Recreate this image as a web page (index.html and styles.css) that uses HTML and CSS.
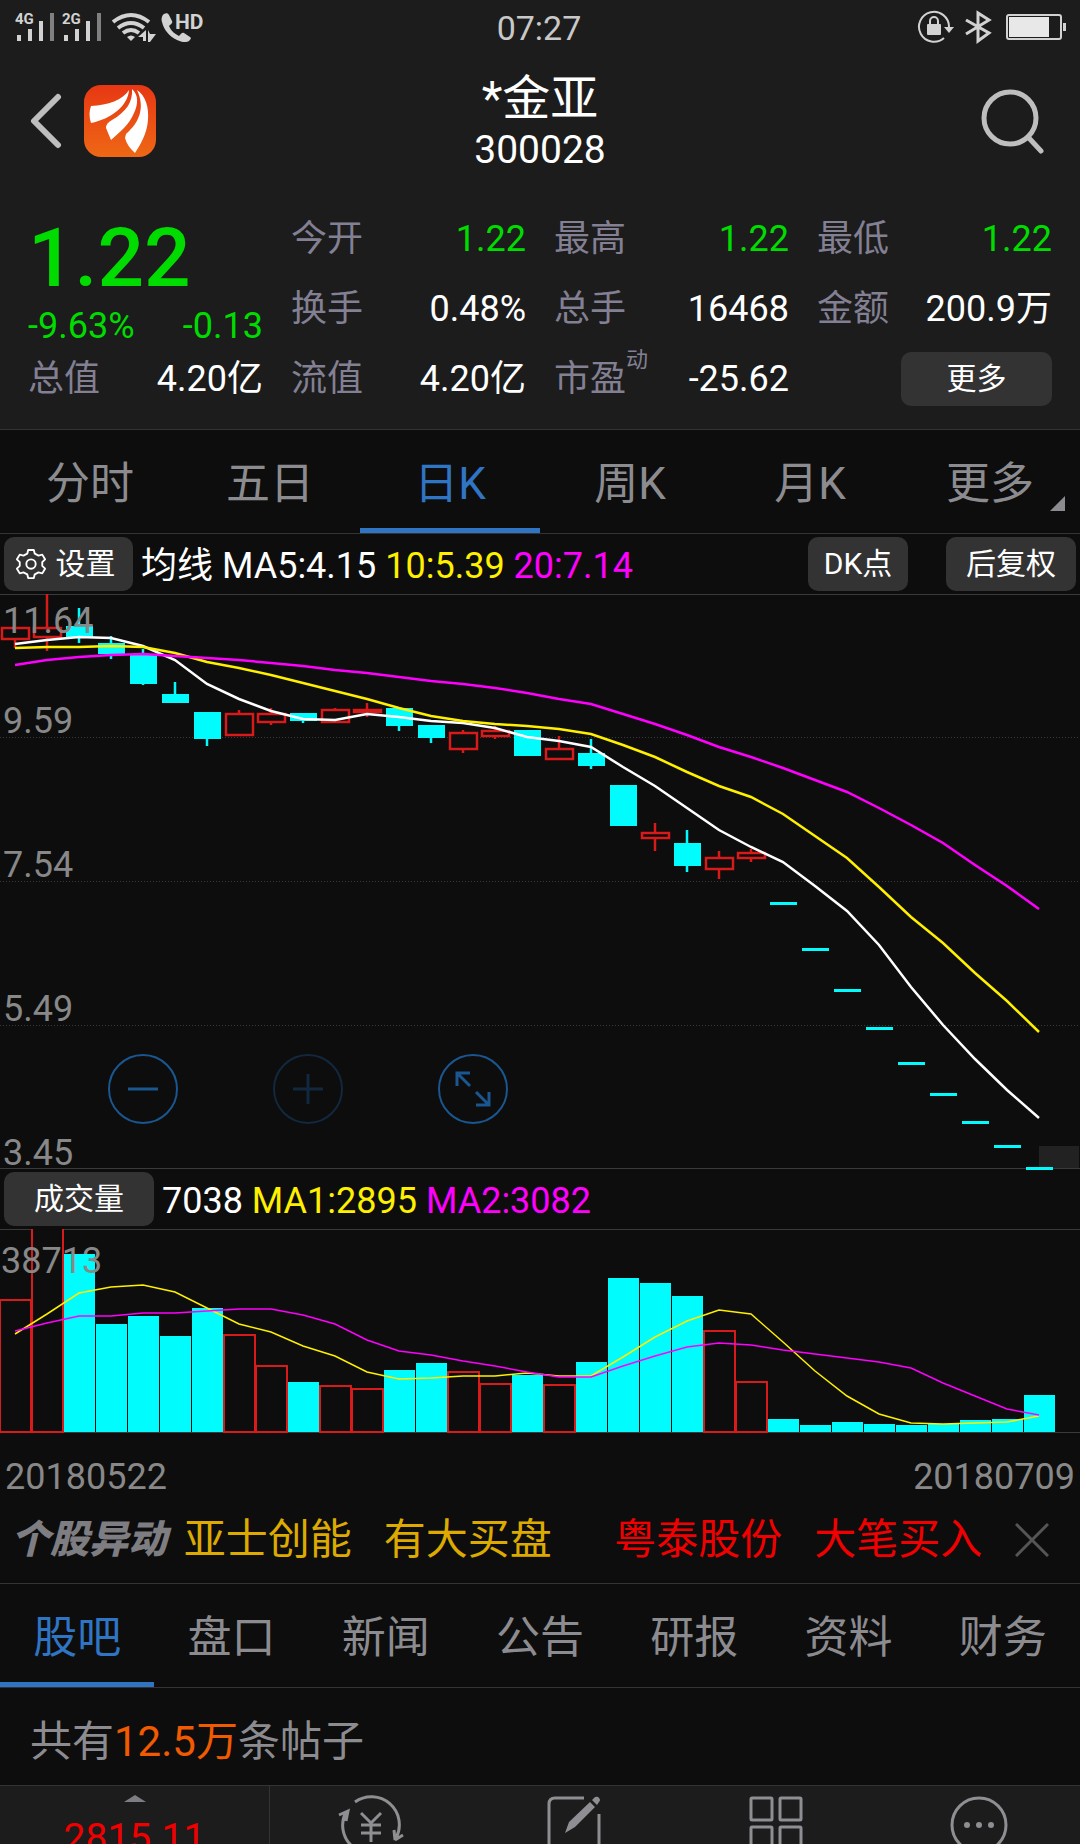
FILE: index.html
```html
<!DOCTYPE html>
<html lang="zh-CN">
<head>
  <meta charset="UTF-8">
  <meta name="viewport" content="width=device-width, initial-scale=1.0">
  <title>*金亚 300028</title>
  <link rel="stylesheet" href="styles.css">
</head>
<body>
<div class="app">

  <!-- 状态栏 -->
  <div class="status-bar">
    <svg class="status-left" width="200" height="36" viewBox="10 10 200 36" fill="#d2d2d2">
      <text x="15" y="24" class="status-net">4G</text>
      <path d="M17 35h4v6h-4zM28 29h4v12h-4zM39 21h4v20h-4z"/>
      <path d="M50 13h4v28h-4z" fill="#808080"/>
      <text x="62" y="24" class="status-net">2G</text>
      <path d="M64 35h4v6h-4zM75 29h4v12h-4zM86 21h4v20h-4z"/>
      <path d="M97 13h4v28h-4z" fill="#808080"/>
      <g fill="none" stroke="#d2d2d2" stroke-width="4">
        <path d="M113 22q18-14 36 0"/>
        <path d="M118 28q13-10 26 0"/>
        <path d="M123 33q8-6 16 0"/>
      </g>
      <path d="M127 37q4-3 8 0l-4 4zM146 30v11h-3v-4h-5zM148 30l2 4h6l-6 8h-2z"/>
      <path d="M164 14c2-1 4-1 5 1l3 6c1 2-1 3-3 5 2 5 6 8 10 10 2-2 3-4 5-3l6 4c2 1 0 3-1 4-3 2-8 1-12-1-8-4-13-10-15-18-1-3 0-7 2-8z"/>
      <text x="175" y="29" class="status-hd">HD</text>
    </svg>
    <span class="status-time">07:27</span>
    <svg class="status-right" width="154" height="36" viewBox="912 10 154 36" fill="#d2d2d2">
      <path d="M942 38a15 15 0 1 1 5-11" fill="none" stroke="#d2d2d2" stroke-width="2"/>
      <path d="M942 27h10l-5 6z"/>
      <rect x="925" y="24" width="14" height="11" rx="1"/>
      <path d="M928 25v-4a4 4 0 0 1 8 0v4" fill="none" stroke="#d2d2d2" stroke-width="2"/>
      <path d="M964 20l23 13-11 8V13l11 7-23 14" fill="none" stroke="#d2d2d2" stroke-width="3"/>
      <rect x="1005" y="15" width="54" height="24" rx="2" fill="none" stroke="#d2d2d2" stroke-width="2"/>
      <rect x="1007" y="17" width="40" height="20" fill="#e8e8e8"/>
      <rect x="1061" y="23" width="3" height="8"/>
    </svg>
  </div>

  <!-- 标题 -->
  <header class="header">
    <div class="header-left">
      <a href="#" class="back" aria-label="返回">
        <svg width="32" height="56" viewBox="0 0 32 56"><path d="M28 4L4 28l24 24" fill="none" stroke="#bebebe" stroke-width="6" stroke-linecap="round" stroke-linejoin="round"/></svg>
      </a>
      <svg class="logo" width="72" height="72" viewBox="0 0 72 72">
        <defs>
          <linearGradient id="logo-bg" x1="0" y1="0" x2="0" y2="1">
            <stop offset="0" stop-color="#e73713"/>
            <stop offset="1" stop-color="#ee6815"/>
          </linearGradient>
        </defs>
        <rect width="72" height="72" rx="17" fill="url(#logo-bg)"/>
        <g fill="#fff">
          <path d="M45 5C44 21 27 34 7 38Q4 29 7 21C24 20 39 15 45 5z"/>
          <path d="M48 4C55 10 54 20 50 28C45 40 36 47 27 55L22 43Q22 38 28 35C42 27 49 17 48 4z"/>
          <path d="M53 5C62 11 65 23 64 35C63 49 56 60 51 68Q43 61 41 53L42 49C56 37 61 22 53 5z"/>
        </g>
      </svg>
    </div>
    <h1 class="title">*金亚<span class="code">300028</span></h1>
    <button class="search" aria-label="搜索">
      <svg width="64" height="68" viewBox="0 0 64 68" fill="none" stroke="#bebebe" stroke-width="5" stroke-linecap="round"><circle cx="30" cy="31" r="26"/><path d="M48 50l13 14"/></svg>
    </button>
  </header>

  <!-- 行情 -->
  <section class="quote">
    <div class="price">
      <strong class="price-now">1.22</strong>
      <div class="price-change"><span>-9.63%</span><span>-0.13</span></div>
    </div>
    <div class="item"><span class="label">今开</span><span class="down">1.22</span></div>
    <div class="item"><span class="label">最高</span><span class="down">1.22</span></div>
    <div class="item"><span class="label">最低</span><span class="down">1.22</span></div>
    <div class="item"><span class="label">换手</span><span>0.48%</span></div>
    <div class="item"><span class="label">总手</span><span>16468</span></div>
    <div class="item"><span class="label">金额</span><span>200.9万</span></div>
    <div class="item"><span class="label">总值</span><span>4.20亿</span></div>
    <div class="item"><span class="label">流值</span><span>4.20亿</span></div>
    <div class="item"><span class="label">市盈<sup>动</sup></span><span>-25.62</span></div>
    <div class="item item-more"><button class="btn btn-more">更多</button></div>
  </section>

  <!-- K线周期 -->
  <nav class="tabs">
    <a href="#">分时</a>
    <a href="#">五日</a>
    <a href="#" class="active">日K</a>
    <a href="#">周K</a>
    <a href="#">月K</a>
    <a href="#" class="has-menu">更多</a>
  </nav>

  <div class="toolbar">
    <button class="btn btn-set">
      <svg width="30" height="32" viewBox="-16 -17 32 34" fill="none" stroke="#fff" stroke-width="2" stroke-linejoin="round">
        <path d="M-3-15H3L4-11L8-9L12-10L15-5L12-2V2L15 5L12 10L8 9L4 11L3 15H-3L-4 11L-8 9L-12 10L-15 5L-12 2V-2L-15-5L-12-10L-8-9L-4-11z"/>
        <circle r="5"/>
      </svg>
      设置
    </button>
    <p class="legend">均线 MA5:4.15 <span class="ma-yellow">10:5.39</span> <span class="ma-pink">20:7.14</span></p>
    <button class="btn btn-dk">DK点</button>
    <button class="btn btn-fq">后复权</button>
  </div>

  <!-- K线图 -->
  <div class="chart">
    <svg id="kline" viewBox="0 0 1080 575">
      <path class="axis" d="M0 .5H1080M0 574.5H1080"/>
      <path class="grid" d="M0 143.5H1080M0 287.5H1080M0 431.5H1080"/>
      <rect x="1039" y="552" width="40" height="22" fill="#222"/>
      <g class="plot"></g>
      <g class="scale">
        <text x="3" y="39">11.64</text>
        <text x="3" y="139">9.59</text>
        <text x="3" y="283">7.54</text>
        <text x="3" y="427">5.49</text>
        <text x="3" y="571">3.45</text>
      </g>
    </svg>
    <div class="zoom">
      <button aria-label="缩小"><svg viewBox="0 0 70 70"><circle cx="35" cy="35" r="34"/><path d="M20 35h30"/></svg></button>
      <button aria-label="放大" disabled><svg viewBox="0 0 70 70"><circle cx="35" cy="35" r="34"/><path d="M20 35h30M35 20v30"/></svg></button>
      <button aria-label="全屏"><svg viewBox="0 0 70 70"><circle cx="35" cy="35" r="34"/><path d="M32 32L19 19M19 32V19h13M38 38l13 13M38 51h13V38"/></svg></button>
    </div>
  </div>

  <div class="toolbar">
    <button class="btn btn-vol">成交量</button>
    <p class="legend">7038 <span class="ma-yellow">MA1:2895</span> <span class="ma-pink">MA2:3082</span></p>
  </div>

  <!-- 成交量图 -->
  <div class="chart">
    <svg id="volume" viewBox="0 0 1080 204">
      <path class="axis" d="M0 .5H1080M0 203.5H1080"/>
      <g class="plot"></g>
      <g class="scale"><text x="1" y="44">38713</text></g>
    </svg>
  </div>
  <div class="dates"><span>20180522</span><span>20180709</span></div>

  <!-- 个股异动 -->
  <div class="alerts">
    <em class="alerts-name">个股异动</em>
    <a href="#" class="alert-gold"><span>亚士创能</span><span>有大买盘</span></a>
    <a href="#" class="alert-red"><span>粤泰股份</span><span>大笔买入</span></a>
    <button class="close" aria-label="关闭">
      <svg width="34" height="34" viewBox="0 0 34 34" stroke="#555" stroke-width="3"><path d="M1 1l32 32M33 1L1 33"/></svg>
    </button>
  </div>

  <nav class="tabs">
    <a href="#" class="active">股吧</a>
    <a href="#">盘口</a>
    <a href="#">新闻</a>
    <a href="#">公告</a>
    <a href="#">研报</a>
    <a href="#">资料</a>
    <a href="#">财务</a>
  </nav>

  <p class="posts">共有<b>12.5万</b>条帖子</p>

  <!-- 底部工具栏 -->
  <footer class="bottom">
    <a href="#" class="index"><i class="arrow"></i>2815.11</a>
    <a href="#" aria-label="交易">
      <svg width="68" height="60" viewBox="-34 -30 68 60"><path d="M-16-23A28 28 0 0 1 25 13M24 15l8-5M24 15l-1-10M16 23A28 28 0 0 1-25-13M-32-10l9-4-2 10M-10-12L0-2 10-12M0-2V17M-10 0H10M-10 8H10"/></svg>
    </a>
    <a href="#" aria-label="发帖">
      <svg width="56" height="60" viewBox="0 0 56 60"><path d="M38 3H9Q3 3 3 9V51Q3 57 9 57H47Q53 57 53 51V19"/><path d="M19 38l4-11L44 7l5 5L29 32zM46 5l3-3q3-1 4 1 2 2 0 4l-2 3z" fill="#8e8e93" stroke="none"/></svg>
    </a>
    <a href="#" aria-label="功能">
      <svg width="56" height="60" viewBox="0 0 56 60"><rect x="3" y="3" width="21" height="22" rx="1"/><rect x="32" y="3" width="21" height="22" rx="1"/><rect x="3" y="32" width="21" height="22" rx="1"/><rect x="32" y="32" width="21" height="22" rx="1"/></svg>
    </a>
    <a href="#" aria-label="更多">
      <svg width="60" height="60" viewBox="-30 -30 60 60"><circle r="27"/><g fill="#8e8e93" stroke="none"><circle cx="-12" r="3"/><circle r="3"/><circle cx="12" r="3"/></g></svg>
    </a>
  </footer>

</div>
<script src="chart.js"></script>
</body>
</html>
```

FILE: styles.css
```css
* {
  margin: 0;
  padding: 0;
  box-sizing: border-box;
}

body {
  background: #0d0d0d;
  color: #fff;
  font-family: Roboto, "Noto Sans CJK SC", sans-serif;
  font-size: 36px;
  line-height: 40px;
}

a {
  color: inherit;
  text-decoration: none;
}

button {
  background: none;
  border: 0;
  color: inherit;
  font: inherit;
}

svg {
  display: block;
}

.app {
  height: 100vh;
  overflow: hidden;
}

/* status bar */
.status-bar {
  display: grid;
  grid-template-columns: 1fr auto 1fr;
  align-items: center;
  height: 56px;
  padding: 0 12px 0 10px;
  background: #1c1c1c;
}

.status-time {
  font-size: 34px;
  color: #c8c8c8;
}

.status-right {
  justify-self: end;
}

.status-net {
  font-size: 15px;
  font-weight: 700;
}

.status-hd {
  font-size: 21px;
  font-weight: 700;
}

/* header */
.header {
  display: grid;
  grid-template-columns: 1fr auto 1fr;
  align-items: center;
  height: 148px;
  padding: 0 30px 19px;
  background: #1c1c1c;
}

.header-left {
  display: flex;
  align-items: center;
  gap: 22px;
}

.title {
  padding-top: 2px;
  font-size: 48px;
  font-weight: 400;
  line-height: 56px;
  text-align: center;
}

.code {
  display: block;
  font-size: 39px;
  line-height: 46px;
}

.search {
  justify-self: end;
  margin-right: 6px;
}

/* quote */
.quote {
  display: grid;
  grid-template-columns: repeat(4, 1fr);
  grid-auto-rows: 70px;
  column-gap: 28px;
  padding: 0 28px 15px;
  background: #1c1c1c;
  border-bottom: 1px solid #333;
}

.price {
  grid-row: span 2;
  padding-top: 6px;
  color: #00dc00;
}

.price-now {
  display: block;
  font-size: 82px;
  font-weight: 500;
  line-height: 96px;
}

.price-change {
  display: flex;
  justify-content: space-between;
}

.item {
  display: flex;
  justify-content: space-between;
  align-items: center;
}

.item-more {
  justify-content: flex-end;
}

.label {
  color: #838094;
}

.label sup {
  font-size: 22px;
  line-height: 1px;
  vertical-align: 24px;
}

.down {
  color: #00dc00;
}

.btn {
  flex: none;
  height: 54px;
  background: #333;
  border-radius: 10px;
  font-size: 30px;
}

.btn-more {
  width: 151px;
}

/* tabs */
.tabs {
  display: flex;
  height: 104px;
  border-bottom: 1px solid #333;
  color: #8c8c90;
  font-size: 44px;
  line-height: 88px;
}

.tabs a {
  position: relative;
  flex: 1;
  padding-top: 10px;
  border-bottom: 5px solid transparent;
  text-align: center;
}

.tabs .active {
  border-color: #3074c4;
  color: #3074c4;
}

.has-menu::after {
  content: "";
  position: absolute;
  right: 15px;
  bottom: 17px;
  border-left: 15px solid transparent;
  border-bottom: 15px solid #8c8c90;
}

/* chart toolbars */
.toolbar {
  display: flex;
  align-items: center;
  gap: 8px;
  height: 60px;
  padding: 0 4px;
}

.legend {
  flex: 1;
  padding-top: 3px;
  white-space: nowrap;
}

.btn-set {
  display: flex;
  align-items: center;
  justify-content: center;
  gap: 10px;
  width: 129px;
  padding-right: 6px;
}

.btn-dk {
  width: 100px;
  margin-right: 30px;
}

.btn-fq {
  width: 130px;
}

.btn-vol {
  width: 150px;
}

.ma-yellow {
  color: #fff000;
}

.ma-pink {
  color: #f0f;
}

/* charts */
.chart {
  position: relative;
}

.chart > svg {
  width: 100%;
}

#kline {
  overflow: visible;
}

.axis {
  stroke: #3a3a3a;
}

.grid {
  stroke: #3a3a3a;
  stroke-dasharray: 1 2;
}

.scale {
  fill: #888;
  font-size: 36px;
}

.up-bar {
  fill: #0d0d0d;
  stroke: #d71a1a;
  stroke-width: 2.5;
}

.down-bar {
  fill: #00fcfc;
}

.wick-up {
  stroke: #d71a1a;
  stroke-width: 2.5;
}

.wick-down {
  stroke: #00fcfc;
  stroke-width: 2.5;
}

.line {
  fill: none;
  stroke-width: 2.5;
}

#volume .up-bar {
  stroke-width: 2;
}

#volume .line {
  stroke-width: 1.5;
}

.zoom {
  position: absolute;
  left: 10%;
  bottom: 45px;
  display: flex;
  gap: 95px;
}

.zoom svg {
  width: 70px;
  height: 70px;
  fill: none;
  stroke: #1a5690;
  stroke-width: 3;
}

.zoom circle {
  stroke-width: 2;
}

.zoom button:disabled svg {
  stroke: #12283e;
}

.dates {
  display: flex;
  justify-content: space-between;
  padding: 24px 5px 0;
  color: #888;
}

/* alerts */
.alerts {
  display: flex;
  align-items: center;
  justify-content: space-between;
  height: 87px;
  padding: 0 31px 0 11px;
  border-bottom: 1px solid #333;
  font-size: 42px;
}

.alerts-name {
  color: #7d7d82;
  font-size: 39px;
  font-weight: 900;
}

.alerts a {
  display: flex;
  gap: 32px;
}

.alert-gold {
  margin-right: 46px;
  color: #dcaa00;
}

.alert-red {
  margin-right: 16px;
  color: #f00000;
}

/* posts */
.posts {
  padding: 34px 30px 23px;
  border-bottom: 1px solid #333;
  color: #8c8c90;
  font-size: 42px;
}

.posts b {
  color: #f05a00;
  font-weight: 400;
}

/* bottom bar */
.bottom {
  display: grid;
  grid-template-columns: 4fr 3fr 3fr 3fr 3fr;
  background: #1c1c1c;
}

.bottom a {
  display: flex;
  justify-content: center;
  padding: 9px 0;
}

.bottom svg {
  fill: none;
  stroke: #8e8e93;
  stroke-width: 3;
}

.bottom .index {
  flex-direction: column;
  align-items: center;
  gap: 16px;
  border-right: 1px solid #333;
  color: #f00000;
  font-size: 39px;
}

.arrow {
  border: 11px solid transparent;
  border-top: 0;
  border-bottom: 7px solid #7d7d82;
}
```

FILE: chart.js
```js
// [涨跌, 最高, 实体上沿, 实体下沿, 最低]
const candles = [
  ['u', 34, 34, 45, 54], ['u', 0, 34, 43, 57], ['d', 14, 32, 43, 49],
  ['d', 42, 49, 60, 65], ['d', 55, 61, 90, 91], ['d', 88, 100, 109, 109],
  ['d', 118, 118, 145, 152], ['u', 116, 120, 141, 141], ['u', 114, 120, 128, 131],
  ['d', 119, 119, 127, 129], ['u', 114, 116, 128, 128], ['u', 109, 116, 118, 123],
  ['d', 114, 114, 132, 137], ['d', 131, 131, 144, 149], ['u', 136, 139, 155, 159],
  ['u', 132, 137, 142, 145], ['d', 136, 136, 162, 162], ['u', 142, 155, 165, 165],
  ['d', 145, 159, 172, 175], ['d', 191, 191, 232, 232], ['u', 229, 239, 244, 257],
  ['d', 236, 249, 272, 278], ['u', 257, 264, 275, 285], ['u', 255, 259, 264, 268],
  ['d', 308, 308, 310, 310], ['d', 354, 354, 356, 356], ['d', 395, 395, 397, 397],
  ['d', 433, 433, 435, 435], ['d', 468, 468, 470, 470], ['d', 499, 499, 501, 501],
  ['d', 527, 527, 529, 529], ['d', 551, 551, 553, 553], ['d', 573, 573, 575, 575]
];

const klineMa = {
  '#ffffff': [50, 46, 43, 44, 52, 66, 90, 105, 117, 125, 126, 120, 123, 127, 129, 134, 143, 147, 153, 173, 192, 214, 236, 253, 268, 292, 317, 351, 393, 431, 465, 496, 524],
  '#fff000': [54, 53, 53, 52, 53, 59, 68, 74, 81, 89, 97, 105, 114, 122, 127, 130, 132, 135, 140, 151, 163, 178, 192, 203, 220, 242, 264, 293, 323, 349, 379, 407, 438],
  '#ff00ff': [71, 66, 63, 61, 60, 62, 64, 66, 69, 72, 76, 79, 83, 87, 90, 94, 99, 105, 110, 120, 130, 141, 153, 163, 174, 186, 198, 214, 231, 249, 271, 292, 315]
};

// 成交量柱上沿和颜色
const volumes = [71, -2, 25, 95, 87, 107, 79, 106, 137, 153, 157, 160, 141, 134, 143, 155, 146, 156, 133, 49, 54, 67, 102, 153, 190, 196, 193, 195, 196, 195, 191, 190, 166];
const volumeTypes = 'uuddddduuduudduududddduuddddddddd';

const volumeMa = {
  '#fff000': [105, 85, 64, 58, 56, 63, 79, 95, 103, 117, 127, 143, 150, 149, 147, 147, 144, 147, 147, 128, 108, 92, 81, 85, 113, 142, 167, 185, 194, 195, 194, 193, 187],
  '#ff00ff': [102, 94, 87, 87, 84, 84, 82, 80, 80, 86, 95, 111, 122, 126, 132, 137, 143, 148, 148, 137, 127, 118, 114, 116, 121, 125, 129, 133, 139, 154, 167, 180, 186]
};

const STEP = 32;

function drawLines(series) {
  return Object.entries(series).map(([color, ys]) => {
    const points = ys.map((y, i) => `${15 + i * STEP},${y}`).join(' ');
    return `<polyline class="line" stroke="${color}" points="${points}"/>`;
  }).join('');
}

function drawCandle([type, high, top, bottom, low], i) {
  const x = 15 + i * STEP;
  if (type === 'u') {
    return `<path class="wick-up" d="M${x} ${high}V${low}"/>` +
      `<rect class="up-bar" x="${x - 13}" y="${top}" width="27" height="${bottom - top}"/>`;
  }
  return `<path class="wick-down" d="M${x} ${high}V${low}"/>` +
    `<rect class="down-bar" x="${x - 13}" y="${top}" width="27" height="${Math.max(bottom - top, 3)}"/>`;
}

function drawVolume(top, i) {
  const name = volumeTypes[i] === 'u' ? 'up-bar' : 'down-bar';
  return `<rect class="${name}" x="${i * STEP}" y="${top}" width="31" height="${203 - top}"/>`;
}

document.querySelector('#kline .plot').innerHTML = candles.map(drawCandle).join('') + drawLines(klineMa);
document.querySelector('#volume .plot').innerHTML = volumes.map(drawVolume).join('') + drawLines(volumeMa);
```
